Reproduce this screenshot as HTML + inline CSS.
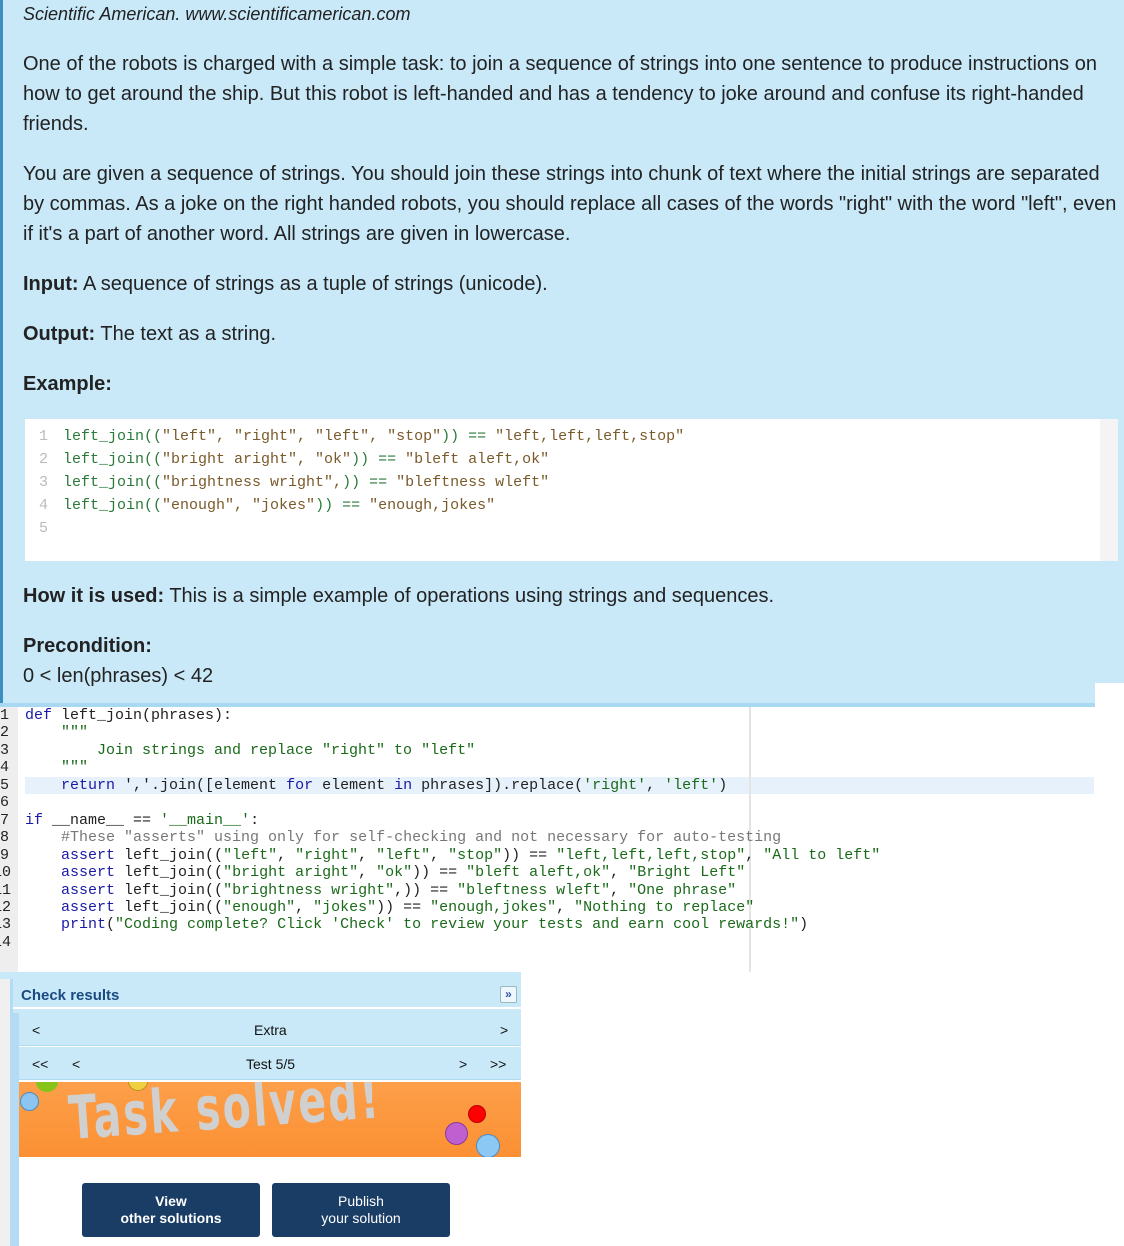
<!DOCTYPE html>
<html><head><meta charset="utf-8"><style>
*{margin:0;padding:0;box-sizing:border-box}
body{width:1124px;height:1246px;position:relative;background:#fff;overflow:hidden;font-family:"Liberation Sans",sans-serif}
#top{position:absolute;left:0;top:0;width:1124px;height:703px;background:#c9e9f9;border-left:3px solid #3b8fbf}
#top p{position:absolute;left:20px;font-size:20px;line-height:30px;color:#222;width:1094px}
.w{position:absolute;left:1095px;top:683px;width:29px;height:30px;background:#fff}
#ex{position:absolute;left:22px;top:419px;width:1093px;height:142px;background:#fff}
#ex .sb{position:absolute;right:0;top:0;width:18px;height:142px;background:#f4f4f4}
#ex pre{position:absolute;left:14px;top:6px;font-family:"Liberation Mono",monospace;font-size:15px;line-height:23px;color:#7a5a2a}
.ln{color:#bbb;display:inline-block;width:24px}
.fn{color:#2a7a3a}
#bar{position:absolute;left:0;top:703px;width:1095px;height:4px;background:#a9d8f2}
#code{position:absolute;left:0;top:707px;width:1095px;height:265px;background:#fff}
#gut{position:absolute;left:0;top:0;width:18px;height:265px;background:#eee}
#code pre{position:absolute;left:0;top:0;font-family:"Liberation Mono",monospace;font-size:15px;line-height:17.46px;color:#222}
#code .n{display:inline-block;width:11px;overflow:hidden;direction:rtl;text-align:left;color:#222;vertical-align:top}
#code .g{display:inline-block;width:14px}
.k{color:#1a1aa6}.s{color:#1a6a1a}.c{color:#777}
#hl{position:absolute;left:25px;top:70px;width:1069px;height:17px;background:#e6f1fb}
#vline{position:absolute;left:749px;top:0;width:2px;height:265px;background:#e4e4e4}
#panel{position:absolute;left:0;top:972px;width:521px;height:274px;background:#c9e9f9}
#gs{position:absolute;left:0;top:979px;width:10px;height:267px;background:#f0f0f0}
#hdr{position:absolute;left:13px;top:979px;width:508px;height:30px;background:#c9e9f9;border-bottom:2px solid #fff}
#hdr span{position:absolute;left:8px;top:8px;font-weight:bold;font-size:15px;color:#1a4a80}
#hdr i{position:absolute;right:4px;top:7px;width:17px;height:17px;border:1px solid #9bb;background:#eef7fd;border-radius:2px;font-style:normal;font-size:12px;color:#35a;text-align:center;line-height:15px;font-weight:bold}
#inner{position:absolute;left:19px;top:1013px;width:502px;height:233px;background:#fff}
.row{position:absolute;left:0;width:502px;height:33px;background:#c9e9f9;font-size:14px;color:#111;border-bottom:1px solid #b3dbf0}
.row span{position:absolute;top:9px}
#ban{position:absolute;left:0;top:69px;width:502px;height:75px;background:linear-gradient(#fd9f4a,#fb9033);overflow:hidden}
#ban b{position:absolute;left:50px;top:2px;font-size:60px;line-height:70px;color:#d0d0d0;font-family:"DejaVu Sans Condensed","DejaVu Sans",sans-serif;transform:rotate(-4deg) scaleX(0.76);transform-origin:left center;letter-spacing:3px;white-space:nowrap}
.dot{position:absolute;border-radius:50%}
.btn{position:absolute;top:170px;width:178px;height:54px;background:#1a3d66;border-radius:3px;color:#fff;font-size:14px;text-align:center;line-height:17px;padding-top:10px}
</style></head><body>
<div id="top">
<p style="top:0;font-style:italic;font-size:18px;line-height:28px">Scientific American. www.scientificamerican.com</p>
<p style="top:49px">One of the robots is charged with a simple task: to join a sequence of strings into one sentence to produce instructions on how to get around the ship. But this robot is left-handed and has a tendency to joke around and confuse its right-handed friends.</p>
<p style="top:159px">You are given a sequence of strings. You should join these strings into chunk of text where the initial strings are separated by commas. As a joke on the right handed robots, you should replace all cases of the words "right" with the word "left", even if it's a part of another word. All strings are given in lowercase.</p>
<p style="top:269px"><b>Input:</b> A sequence of strings as a tuple of strings (unicode).</p>
<p style="top:319px"><b>Output:</b> The text as a string.</p>
<p style="top:369px"><b>Example:</b></p>
<p style="top:581px"><b>How it is used:</b> This is a simple example of operations using strings and sequences.</p>
<p style="top:631px"><b>Precondition:</b></p>
<p style="top:661px">0 &lt; len(phrases) &lt; 42</p>
<div id="ex"><div class="sb"></div><pre><span class="ln">1</span><span class="fn">left_join((</span>"left", "right", "left", "stop"<span class="fn">)) == </span>"left,left,left,stop"
<span class="ln">2</span><span class="fn">left_join((</span>"bright aright", "ok"<span class="fn">)) == </span>"bleft aleft,ok"
<span class="ln">3</span><span class="fn">left_join((</span>"brightness wright",<span class="fn">)) == </span>"bleftness wleft"
<span class="ln">4</span><span class="fn">left_join((</span>"enough", "jokes"<span class="fn">)) == </span>"enough,jokes"
<span class="ln">5</span></pre></div>
</div>
<div class="w"></div>
<div id="bar"></div>
<div id="code"><div id="gut"></div><div id="hl"></div><div id="vline"></div><pre><span class="n">1</span><span class="g"></span><span class="k">def</span> left_join(phrases):
<span class="n">2</span><span class="g"></span>    <span class="s">"""</span>
<span class="n">3</span><span class="g"></span><span class="s">        Join strings and replace "right" to "left"</span>
<span class="n">4</span><span class="g"></span>    <span class="s">"""</span>
<span class="n">5</span><span class="g"></span>    <span class="k">return</span> ','.join([element <span class="k">for</span> element <span class="k">in</span> phrases]).replace(<span class="s">'right'</span>, <span class="s">'left'</span>)
<span class="n">6</span><span class="g"></span>
<span class="n">7</span><span class="g"></span><span class="k">if</span> __name__ == <span class="s">'__main__'</span>:
<span class="n">8</span><span class="g"></span>    <span class="c">#These "asserts" using only for self-checking and not necessary for auto-testing</span>
<span class="n">9</span><span class="g"></span>    <span class="k">assert</span> left_join((<span class="s">"left"</span>, <span class="s">"right"</span>, <span class="s">"left"</span>, <span class="s">"stop"</span>)) == <span class="s">"left,left,left,stop"</span>, <span class="s">"All to left"</span>
<span class="n">10</span><span class="g"></span>    <span class="k">assert</span> left_join((<span class="s">"bright aright"</span>, <span class="s">"ok"</span>)) == <span class="s">"bleft aleft,ok"</span>, <span class="s">"Bright Left"</span>
<span class="n">11</span><span class="g"></span>    <span class="k">assert</span> left_join((<span class="s">"brightness wright"</span>,)) == <span class="s">"bleftness wleft"</span>, <span class="s">"One phrase"</span>
<span class="n">12</span><span class="g"></span>    <span class="k">assert</span> left_join((<span class="s">"enough"</span>, <span class="s">"jokes"</span>)) == <span class="s">"enough,jokes"</span>, <span class="s">"Nothing to replace"</span>
<span class="n">13</span><span class="g"></span>    <span class="k">print</span>(<span class="s">"Coding complete? Click 'Check' to review your tests and earn cool rewards!"</span>)
<span class="n">14</span><span class="g"></span></pre></div>
<div id="panel"></div>
<div id="gs"></div>
<div id="hdr"><span>Check results</span><i>»</i></div>
<div id="inner">
<div class="row" style="top:0"><span style="left:13px">&lt;</span><span style="left:235px">Extra</span><span style="left:481px">&gt;</span></div>
<div class="row" style="top:34px"><span style="left:13px">&lt;&lt;</span><span style="left:53px">&lt;</span><span style="left:227px">Test 5/5</span><span style="left:440px">&gt;</span><span style="left:471px">&gt;&gt;</span></div>
<div id="ban"><b>Task solved!</b>
<div class="dot" style="left:1px;top:10px;width:19px;height:19px;background:#8cc4f2;border:1px solid #4a8ac8"></div>
<div class="dot" style="left:17px;top:-10px;width:22px;height:20px;background:#86c41a"></div>
<div class="dot" style="left:109px;top:-10px;width:20px;height:19px;background:#f0d040;border:1px solid #c09020"></div>
<div class="dot" style="left:449px;top:23px;width:18px;height:18px;background:#f00;border:1px solid #b00"></div>
<div class="dot" style="left:426px;top:40px;width:23px;height:23px;background:#c060d0;border:1px solid #8a3a9a"></div>
<div class="dot" style="left:457px;top:52px;width:24px;height:24px;background:#8cc8f4;border:1px solid #4a8ac8"></div>
</div>
<div class="btn" style="left:63px;font-weight:bold">View<br>other solutions</div>
<div class="btn" style="left:253px">Publish<br>your solution</div>
</div>
<div style="position:absolute;left:10px;top:979px;width:3px;height:267px;background:#b3dbf3"></div>
<div style="position:absolute;left:13px;top:1013px;width:6px;height:233px;background:#b3dbf3"></div>
</body></html>
